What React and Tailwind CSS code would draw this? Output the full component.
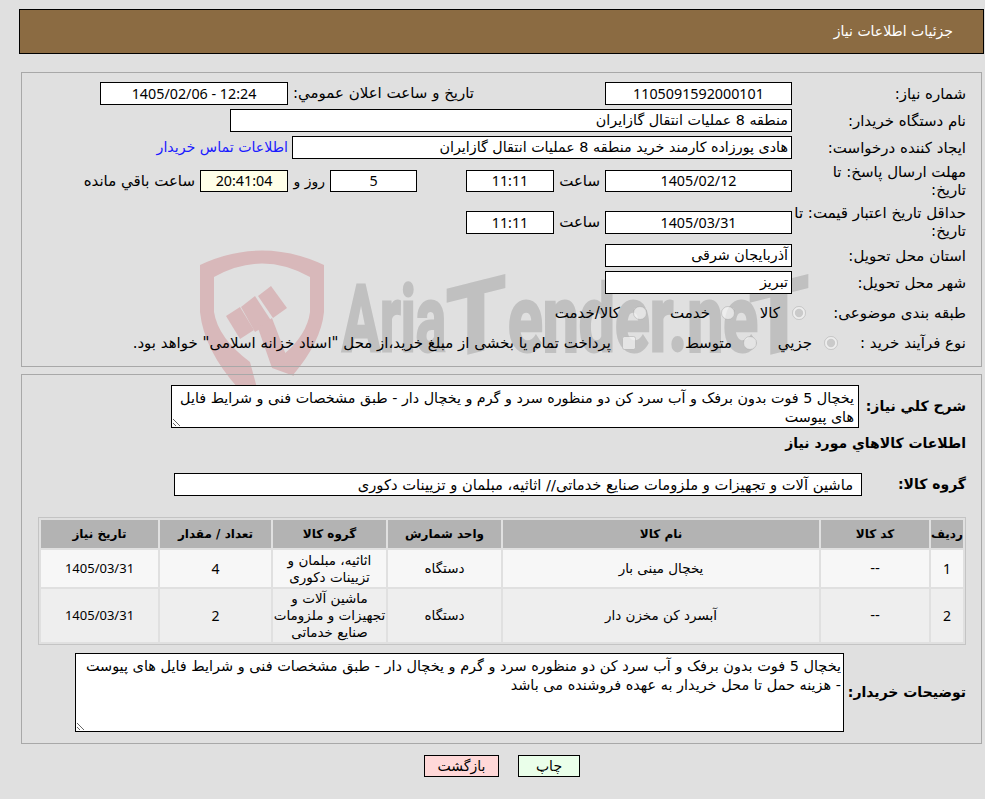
const font = { fontFamily: '"DejaVu Sans", sans-serif' };
const digits = "font-['Noto_Sans','DejaVu_Sans',sans-serif]";

function Field({ className = "", short, plain, soft, children }) {
  const height = short ? "h-[22px] leading-[20px]" : "h-[23px] leading-[21px]";
  const alignClass = plain ? "text-right" : `text-center ${digits}`;
  const bg = soft ? "bg-[#ffffe8]" : "bg-white";
  return (
    <div className={`relative border border-black px-[3px] text-[14.3px] text-black ${height} ${alignClass} ${bg} ${className}`}>
      {children}
    </div>
  );
}

function Row({ label, labelWidth = "w-[174px]", className = "", children }) {
  return (
    <div className={`flex items-center ${className}`}>
      <div className={`shrink-0 text-[15px] leading-[18px] ${labelWidth}`}>{label}</div>
      {children}
    </div>
  );
}

function Radio({ checked, name, label, gap, width }) {
  return (
    <label className={`flex items-center ${width}`}>
      <input type="radio" name={name} defaultChecked={checked} disabled className="m-0 size-[14px]" />
      <span className={gap}>{label}</span>
    </label>
  );
}

function Watermark() {
  const type = {
    fontFamily: "Roboto, sans-serif",
    fontWeight: 700,
    fill: "#c0c0c0",
    stroke: "#c0c0c0",
    strokeWidth: 3,
    direction: "ltr",
  };
  return (
    <svg dir="ltr" className="pointer-events-none absolute left-0 top-0" width="985" height="430" viewBox="0 0 985 430">
      <g fill="#d8b8ba">
        <path d="M200 265 Q262 236 324 265 L324 312 Q321 342 293 375 L283 355 Q307 335 310 312 L310 277 Q262 250 214 277 L214 312 Q218 338 250 362 L257 388 L238 388 Q204 350 200 312 Z" />
        <path d="M226 316 L240 307 L254 330 L240 339 Z" />
        <path d="M241 307 L255 296 L272 322 L255 332 Z" />
        <path d="M258 296 L271 286 L287 308 L273 318 Z" />
        <path d="M258 328 L272 318 L294 376 L272 368 Z" />
      </g>
      <text x="342" y="351" fontSize="92" textLength="104" lengthAdjust="spacingAndGlyphs" style={type}>
        Aria
      </text>
      <text fontSize="96" textAnchor="middle" transform="translate(476 351) skewY(-14)" style={type}>
        T
      </text>
      <text x="508" y="351" fontSize="92" textLength="250" lengthAdjust="spacingAndGlyphs" style={type}>
        ender.ne
      </text>
      <text fontSize="96" textAnchor="middle" transform="translate(779 351) skewY(-14)" style={type}>
        T
      </text>
    </svg>
  );
}

const goods = [
  {
    id: "1",
    name: "يخچال مينی بار",
    unit: "دستگاه",
    group: "اثاثيه، مبلمان و تزیینات دکوری",
    qty: "4",
    date: "1405/03/31",
    bg: "bg-[#f7f7f7]",
    height: "h-[37px]",
  },
  {
    id: "2",
    name: "آبسرد کن مخزن دار",
    unit: "دستگاه",
    group: "ماشین آلات و تجهیزات و ملزومات صنایع خدماتی",
    qty: "2",
    date: "1405/03/31",
    bg: "bg-[#eeeeee]",
    height: "h-[53px]",
  },
];

const summary =
  "يخچال 5 فوت بدون برفک و آب سرد کن دو منظوره سرد و گرم و يخچال دار - طبق مشخصات فنی و شرايط فايل های پيوست";

export default function App() {
  return (
    <div dir="rtl" style={font} className="relative h-[799px] w-[985px] overflow-hidden bg-[#e0e0e0] text-black">
      <Watermark />
      <header className="relative mr-[1px] mt-[9px] flex h-[45px] w-[965px] items-center border border-black bg-[#8b6b42] pr-[30px] text-[14px] text-white">
        جزئيات اطلاعات نياز
      </header>

      <section className="relative ml-[21px] mr-[3px] mt-[18px] h-[295px] border border-[#a8a8a8] pr-[15px] pt-[9px]">
        <Row label="شماره نياز:">
          <Field className="w-[187px]">1105091592000101</Field>
          <div className="mr-[131px] w-[186px] whitespace-nowrap text-[15px]">تاريخ و ساعت اعلان عمومي:</div>
          <Field className="w-[188px]">12:24 - 1405/02/06</Field>
        </Row>
        <Row label="نام دستگاه خريدار:" className="mt-[4px]">
          <Field plain className="w-[562px]">منطقه 8 عمليات انتقال گازايران</Field>
        </Row>
        <Row label="ايجاد کننده درخواست:" className="mt-[4px]">
          <Field plain className="w-[500px]">هادی پورزاده کارمند خريد منطقه 8 عمليات انتقال گازايران</Field>
          <a href="#" className="mr-[4px] text-[14.2px] text-[#1a1aff]">اطلاعات تماس خريدار</a>
        </Row>
        <Row label={<>مهلت ارسال پاسخ: تا<br />تاريخ:</>} className="mt-[4px] h-[36px]">
          <Field short className="w-[187px]">1405/02/12</Field>
          <div className="w-[51px] pr-[5px] text-[15px]">ساعت</div>
          <Field short className="w-[88px]">11:11</Field>
          <div className="w-[49px]" />
          <Field short className="w-[87px]">5</Field>
          <div className="w-[42px] pr-[5px] text-[14px]">روز و</div>
          <Field short soft className="w-[88px]">20:41:04</Field>
          <div className="pr-[5px] text-[15px]">ساعت باقي مانده</div>
        </Row>
        <Row label={<>حداقل تاريخ اعتبار قيمت: تا<br />تاريخ:</>} className="mt-[5px] h-[36px]">
          <Field className="w-[187px]">1405/03/31</Field>
          <div className="w-[51px] pr-[5px] text-[15px]">ساعت</div>
          <Field className="w-[88px]">11:11</Field>
        </Row>
        <Row label="استان محل تحويل:" className="mt-[4px]">
          <Field plain className="w-[187px]">آذربايجان شرقی</Field>
        </Row>
        <Row label="شهر محل تحويل:" className="mt-[4px]">
          <Field plain className="w-[187px]">تبريز</Field>
        </Row>
        <Row label="طبقه بندی موضوعی:" labelWidth="w-[160px]" className="mt-[7px] h-[24px] text-[15px]">
          <Radio checked name="cat" label="کالا" gap="mr-[12px]" width="w-[71px]" />
          <Radio name="cat" label="خدمت" gap="mr-[11px]" width="w-[88px]" />
          <Radio name="cat" label="کالا/خدمت" gap="mr-[13px]" />
        </Row>
        <Row label="نوع فرآيند خريد :" labelWidth="w-[128px]" className="mt-[6px] h-[24px] text-[15px]">
          <Radio checked name="proc" label="جزيي" gap="mr-[12px]" width="w-[81px]" />
          <Radio name="proc" label="متوسط" gap="mr-[11px]" width="w-[121px]" />
          <label className="flex items-center">
            <input type="checkbox" disabled className="m-0 size-[14px]" />
            <span className="mr-[11px] whitespace-nowrap">پرداخت تمام يا بخشی از مبلغ خريد،از محل "اسناد خزانه اسلامی" خواهد بود.</span>
          </label>
        </Row>
      </section>

      <section className="relative ml-[21px] mr-[3px] mt-[7px] h-[370px] border border-[#a8a8a8] pr-[15px] pt-[10px]">
        <div className="flex items-center">
          <div className="w-[107px] shrink-0 text-[14px] font-bold">شرح كلي نياز:</div>
          <textarea
            readOnly
            value={summary}
            className="h-[43px] w-[688px] overflow-hidden border border-black bg-white px-[4px] pt-[3px] text-[14.3px] leading-[19px] outline-none"
          />
        </div>
        <div className="mt-[6px] text-[14px] font-bold leading-[18px]">اطلاعات كالاهاي مورد نياز</div>
        <div className="mt-[21px] flex items-center">
          <div className="w-[104px] shrink-0 text-[14px] font-bold">گروه کالا:</div>
          <div className="h-[23px] w-[688px] border border-black bg-white pr-[8px] text-[14.7px] leading-[21px]">
            ماشین آلات و تجهیزات و ملزومات صنایع خدماتی// اثاثیه، مبلمان و تزیینات دکوری
          </div>
        </div>
        <table className="mt-[21px] w-[928px] table-fixed border-separate border-spacing-[2px] border border-[#c4c4c4] text-center text-[13.5px]">
          <colgroup>
            <col className="w-[32px]" />
            <col className="w-[108px]" />
            <col className="w-[316px]" />
            <col className="w-[113px]" />
            <col className="w-[113px]" />
            <col className="w-[111px]" />
            <col className="w-[117px]" />
          </colgroup>
          <thead>
            <tr className="h-[28px] bg-[#b3b3b3] text-[12px] font-bold">
              <th>ردیف</th>
              <th>کد کالا</th>
              <th>نام کالا</th>
              <th>واحد شمارش</th>
              <th>گروه کالا</th>
              <th>تعداد / مقدار</th>
              <th>تاریخ نیاز</th>
            </tr>
          </thead>
          <tbody>
            {goods.map((g) => (
              <tr key={g.id} className={`${g.bg} ${g.height} leading-[17px]`}>
                <td className={`text-[14px] ${digits}`}>{g.id}</td>
                <td>--</td>
                <td>{g.name}</td>
                <td>{g.unit}</td>
                <td>{g.group}</td>
                <td className={`text-[14px] ${digits}`}>{g.qty}</td>
                <td className={`text-[13px] ${digits}`}>{g.date}</td>
              </tr>
            ))}
          </tbody>
        </table>
        <div className="mt-[8px] flex items-center">
          <div className="w-[122px] shrink-0 text-[14px] font-bold">توضيحات خريدار:</div>
          <textarea
            readOnly
            value={`${summary}\n- هزينه حمل تا محل خريدار به عهده فروشنده می باشد`}
            className="h-[79px] w-[769px] overflow-hidden border border-black bg-white px-[2px] pt-[3px] text-[14.45px] leading-[19px] outline-none"
          />
        </div>
      </section>

      <div className="relative mt-[11px] flex justify-center gap-[19px] pl-[19px]">
        <button className="h-[22px] w-[62px] border border-black bg-[#eaffea] text-[14px]">چاپ</button>
        <button className="h-[22px] w-[75px] border border-black bg-[#ffd8d8] text-[14px]">بازگشت</button>
      </div>
    </div>
  );
}
